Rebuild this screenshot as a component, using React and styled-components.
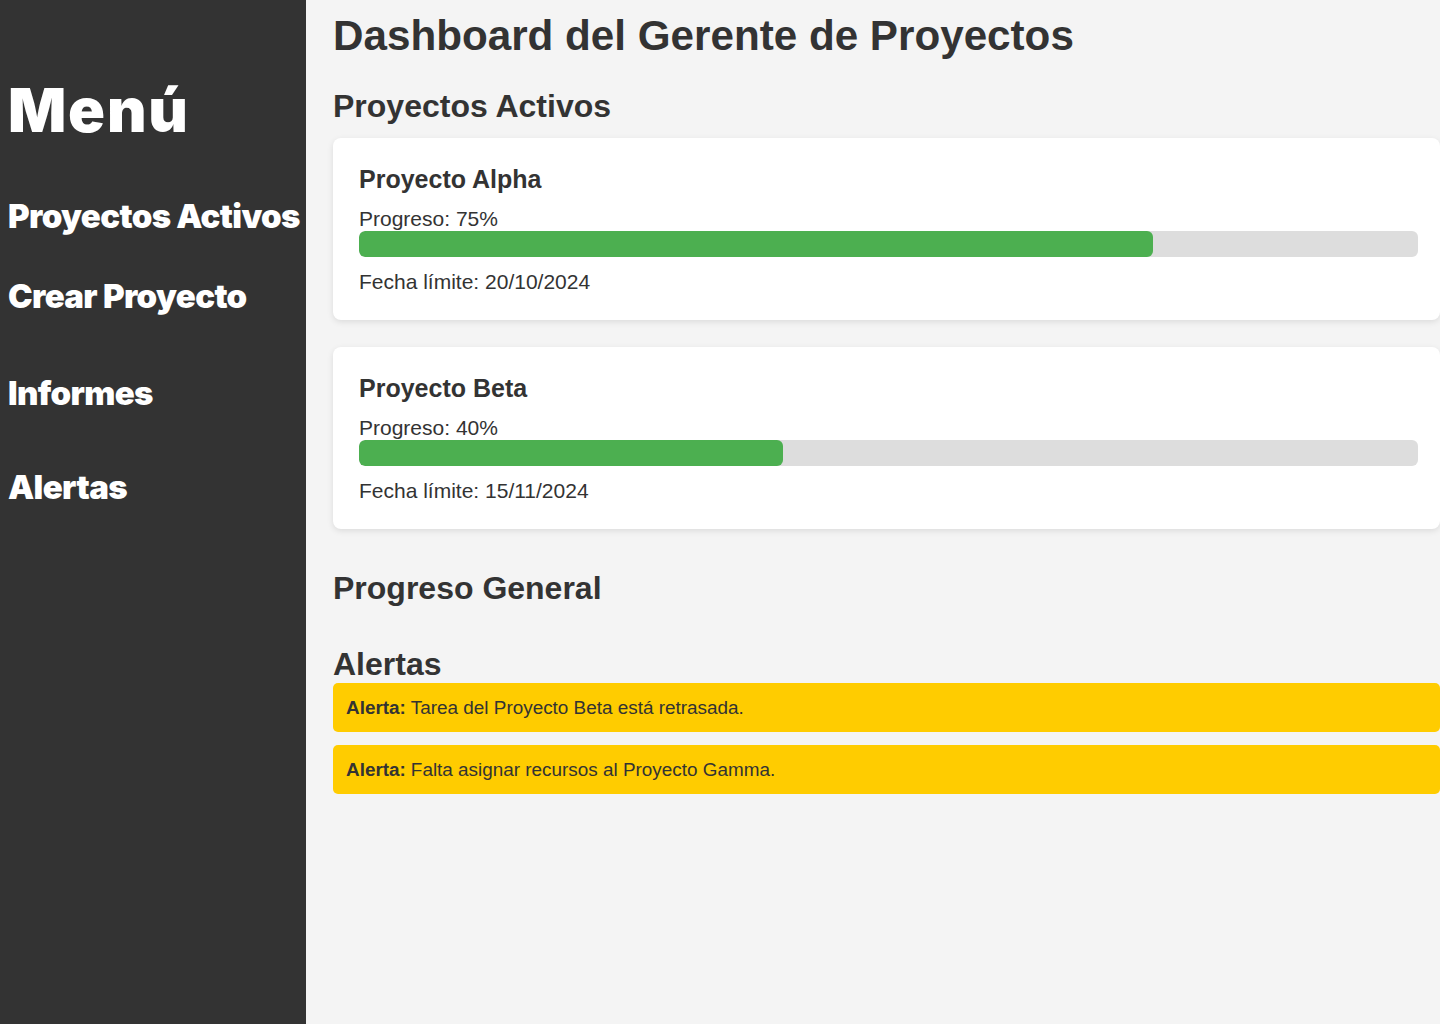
import React from 'react';
import styled, { createGlobalStyle } from 'styled-components';

const GlobalStyle = createGlobalStyle`
  * {
    box-sizing: border-box;
  }

  body {
    margin: 0;
    background-color: #f4f4f4;
    font-family: 'Liberation Sans', Arial, sans-serif;
    color: #333;
  }
`;

const Layout = styled.div`
  display: flex;
  min-height: 100vh;
  overflow: hidden;
`;

const Sidebar = styled.aside`
  width: 306px;
  flex-shrink: 0;
  background-color: #333;
  color: #fff;
  padding: 74px 0 0 8px;
  font-family: 'Inter', 'Noto Sans', sans-serif;
`;

const MenuTitle = styled.h1`
  margin: 0;
  font-size: 61px;
  line-height: 72px;
  font-weight: 900;
  letter-spacing: 1.8px;
`;

const NavList = styled.ul`
  list-style: none;
  margin: 0;
  padding: 0;
`;

const NavItem = styled.li`
  margin-top: ${({ $space }) => $space}px;
  font-size: 33px;
  line-height: 40px;
  font-weight: 900;
  letter-spacing: -0.65px;
  white-space: nowrap;
`;

const Main = styled.main`
  flex: 1;
  min-width: 0;
  padding: 12px 0 40px 27px;
`;

const Title = styled.h1`
  margin: 0 0 28px;
  font-size: 42.2px;
  line-height: 48px;
  font-weight: bold;
`;

const SectionTitle = styled.h2`
  margin: ${({ $top }) => $top || 0}px 0 ${({ $bottom }) => $bottom || 0}px;
  font-size: 32px;
  line-height: 37px;
  font-weight: bold;
`;

const Cards = styled.div`
  display: flex;
  flex-direction: column;
  gap: 27px;
`;

const Card = styled.section`
  background-color: #fff;
  border-radius: 8px;
  padding: 27px 22px 26px 26px;
  box-shadow: 0 2px 6px rgba(0, 0, 0, 0.1);
`;

const CardTitle = styled.h3`
  margin: 0 0 13px;
  font-size: 25px;
  line-height: 29px;
  font-weight: bold;
`;

const Text = styled.p`
  margin: 0;
  font-size: 21px;
  line-height: 24px;
`;

const Bar = styled.div`
  height: 26px;
  margin-bottom: 13px;
  background-color: #ddd;
  border-radius: 6px;
  overflow: hidden;
`;

const BarFill = styled.div`
  height: 100%;
  background-color: #4caf50;
  border-radius: 6px;
`;

const Alerts = styled.div`
  display: flex;
  flex-direction: column;
  gap: 13px;
`;

const Alert = styled.div`
  height: 49px;
  display: flex;
  align-items: center;
  padding: 0 13px;
  background-color: #ffcc00;
  border-radius: 5px;
  font-size: 18.9px;
  color: #333;

  strong {
    margin-right: 5px;
  }
`;

const proyectos = [
  { nombre: 'Proyecto Alpha', progreso: 75, fecha: '20/10/2024' },
  { nombre: 'Proyecto Beta', progreso: 40, fecha: '15/11/2024' },
];

const alertas = [
  'Tarea del Proyecto Beta está retrasada.',
  'Falta asignar recursos al Proyecto Gamma.',
];

const menu = [
  { label: 'Proyectos Activos', space: 50 },
  { label: 'Crear Proyecto', space: 40 },
  { label: 'Informes', space: 57 },
  { label: 'Alertas', space: 54 },
];

export default function App() {
  return (
    <>
      <GlobalStyle />
      <Layout>
        <Sidebar>
          <MenuTitle>Menú</MenuTitle>
          <NavList>
            {menu.map((item) => (
              <NavItem key={item.label} $space={item.space}>
                {item.label}
              </NavItem>
            ))}
          </NavList>
        </Sidebar>

        <Main>
          <Title>Dashboard del Gerente de Proyectos</Title>

          <SectionTitle $bottom={13}>Proyectos Activos</SectionTitle>
          <Cards>
            {proyectos.map((p) => (
              <Card key={p.nombre}>
                <CardTitle>{p.nombre}</CardTitle>
                <Text>Progreso: {p.progreso}%</Text>
                <Bar>
                  <BarFill style={{ width: `${p.progreso}%` }} />
                </Bar>
                <Text>Fecha límite: {p.fecha}</Text>
              </Card>
            ))}
          </Cards>

          <SectionTitle $top={41}>Progreso General</SectionTitle>

          <SectionTitle $top={39}>Alertas</SectionTitle>
          <Alerts>
            {alertas.map((a) => (
              <Alert key={a}>
                <strong>Alerta:</strong> {a}
              </Alert>
            ))}
          </Alerts>
        </Main>
      </Layout>
    </>
  );
}
